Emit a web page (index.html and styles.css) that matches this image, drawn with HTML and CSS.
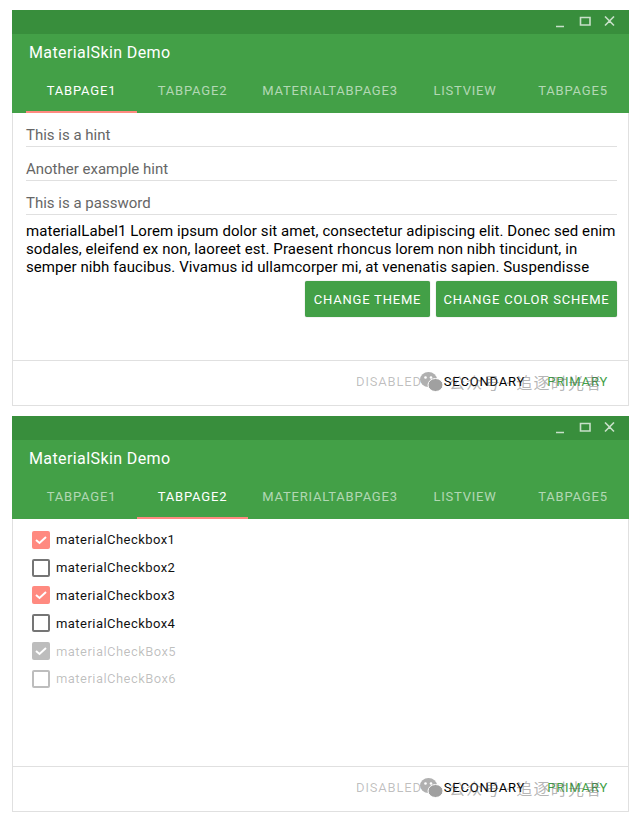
FILE: index.html
```html
<!DOCTYPE html>
<html lang="en">
<head>
<meta charset="utf-8">
<title>MaterialSkin Demo</title>
<link rel="stylesheet" href="styles.css">
</head>
<body>
<section class="window">
  <div class="titlebar">
    <svg class="controls" width="66" height="12" viewBox="0 0 66 12"><path class="ctl" d="M0 10.500h8M24.500 1.500h9.500v7.500h-9.500zM49 0.500l9 9M58 0.500l-9 9"/></svg>
  </div>
  <header class="appbar">
    <h1 class="apptitle">MaterialSkin Demo</h1>
    <nav class="tabs">
      <span class="tab t1 active">TABPAGE1</span>
      <span class="tab t1">TABPAGE2</span>
      <span class="tab t3">MATERIALTABPAGE3</span>
      <span class="tab t4">LISTVIEW</span>
      <span class="tab t5">TABPAGE5</span>
    </nav>
  </header>
  <main class="body">
    <div class="page form">
      <div class="field">This is a hint</div>
      <div class="field">Another example hint</div>
      <div class="field">This is a password</div>
      <p class="lorem">materialLabel1 Lorem ipsum dolor sit amet, consectetur adipiscing elit. Donec sed enim sodales, eleifend ex non, laoreet est. Praesent rhoncus lorem non nibh tincidunt, in semper nibh faucibus. Vivamus id ullamcorper mi, at venenatis sapien. Suspendisse</p>
      <div class="btnrow">
        <button class="btn">CHANGE THEME</button>
        <button class="btn">CHANGE COLOR SCHEME</button>
      </div>
    </div>
    <footer class="foot">
      <span class="fbtn disabled">DISABLED</span>
      <span class="fbtn">SECONDARY</span>
      <span class="fbtn primary">PRIMARY</span>
      <span class="watermark">
        <svg width="23" height="20" viewBox="0 0 23 20"><ellipse class="wm" cx="8.500" cy="7.500" rx="8.500" ry="7.500"/><ellipse class="wm2" cx="15.500" cy="13" rx="7.500" ry="6.500"/><circle class="wd" cx="5.500" cy="5.500" r="1.300"/><circle class="wd" cx="11" cy="5.500" r="1.300"/></svg>
        <span class="wmtext">公众号 · 追逐时光者</span>
      </span>
    </footer>
  </main>
</section>
<section class="window second">
  <div class="titlebar">
    <svg class="controls" width="66" height="12" viewBox="0 0 66 12"><path class="ctl" d="M0 10.500h8M24.500 1.500h9.500v7.500h-9.500zM49 0.500l9 9M58 0.500l-9 9"/></svg>
  </div>
  <header class="appbar">
    <h1 class="apptitle">MaterialSkin Demo</h1>
    <nav class="tabs">
      <span class="tab t1">TABPAGE1</span>
      <span class="tab t1 active">TABPAGE2</span>
      <span class="tab t3">MATERIALTABPAGE3</span>
      <span class="tab t4">LISTVIEW</span>
      <span class="tab t5">TABPAGE5</span>
    </nav>
  </header>
  <main class="body">
    <div class="page checks">
      <div class="check"><span class="box on"><svg width="18" height="18" viewBox="0 0 18 18"><path class="tick" d="M4 9l3.500 3L14 6"/></svg></span>materialCheckbox1</div>
      <div class="check"><span class="box"></span>materialCheckbox2</div>
      <div class="check"><span class="box on"><svg width="18" height="18" viewBox="0 0 18 18"><path class="tick" d="M4 9l3.500 3L14 6"/></svg></span>materialCheckbox3</div>
      <div class="check"><span class="box"></span>materialCheckbox4</div>
      <div class="check off"><span class="box on"><svg width="18" height="18" viewBox="0 0 18 18"><path class="tick" d="M4 9l3.500 3L14 6"/></svg></span>materialCheckBox5</div>
      <div class="check off"><span class="box"></span>materialCheckBox6</div>
    </div>
    <footer class="foot">
      <span class="fbtn disabled">DISABLED</span>
      <span class="fbtn">SECONDARY</span>
      <span class="fbtn primary">PRIMARY</span>
      <span class="watermark">
        <svg width="23" height="20" viewBox="0 0 23 20"><ellipse class="wm" cx="8.500" cy="7.500" rx="8.500" ry="7.500"/><ellipse class="wm2" cx="15.500" cy="13" rx="7.500" ry="6.500"/><circle class="wd" cx="5.500" cy="5.500" r="1.300"/><circle class="wd" cx="11" cy="5.500" r="1.300"/></svg>
        <span class="wmtext">公众号 · 追逐时光者</span>
      </span>
    </footer>
  </main>
</section>
</body>
</html>
```
FILE: styles.css
```css
* { box-sizing: border-box; }
html, body { margin: 0; background: #fff; }
body { padding: 10px 8px 0 12px; font-family: Roboto, "Noto Sans CJK SC", sans-serif; }
.window { width: 617px; height: 396px; display: flex; flex-direction: column; }
.second { margin-top: 10px; }
.titlebar { height: 24px; background: #388e3c; display: flex; justify-content: flex-end; align-items: center; }
.controls { margin-right: 7px; }
.ctl { fill: none; stroke: #c8e0c9; stroke-width: 1.600; }
.appbar { height: 79px; background: #43a047; color: #fff; display: flex; flex-direction: column; }
.apptitle { margin: 0; padding-left: 17px; height: 39px; font-size: 16px; font-weight: 400; line-height: 38px; letter-spacing: 0.4px; }
.tabs { display: flex; padding-left: 14px; height: 40px; }
.tab { height: 40px; line-height: 35px; text-align: center; font-size: 13px; font-weight: 400; letter-spacing: 0.8px; color: rgba(255,255,255,0.6); border-bottom: 2px solid transparent; }
.t1 { width: 111px; }
.t3 { width: 164px; }
.t4 { width: 106px; }
.t5 { width: 110px; }
.tab.active { color: #fff; border-bottom-color: #ff8a80; }
.body { flex: 1; display: flex; flex-direction: column; position: relative; border: 1px solid #e0e0e0; border-top: 0; }
.page { flex: 1; }
.form { padding: 0 11px 0 13px; }
.field { height: 34px; padding-top: 14px; font-size: 15px; line-height: 17px; color: #666; border-bottom: 1px solid #e0e0e0; }
.lorem { margin: 0; padding-top: 7px; font-size: 15px; line-height: 18px; letter-spacing: 0.07px; color: #000; }
.btnrow { display: flex; justify-content: flex-end; gap: 6px; margin-top: 5px; }
.btn { height: 36px; border: 0; border-radius: 2px; padding: 0; background: #43a047; color: #fff; font: 400 13px Roboto, sans-serif; letter-spacing: 0.8px; box-shadow: 0 0 1px rgba(0,0,0,0.45); }
.btn:first-child { width: 125px; }
.btn:last-child { width: 181px; }
.foot { height: 45px; flex: none; border-top: 1px solid #e0e0e0; position: relative; display: flex; justify-content: flex-end; align-items: center; gap: 22px; padding-right: 20px; padding-bottom: 4px; font-size: 13px; font-weight: 400; letter-spacing: 0.8px; color: #000; }
.disabled { color: rgba(0,0,0,0.26); }
.primary { color: #43a047; }
.watermark { position: absolute; left: 407px; top: 9px; display: flex; align-items: center; gap: 6px; }
.wm { fill: #b0b0b0; }
.wm2 { fill: #a0a0a0; stroke: #fff; }
.wd { fill: #fff; }
.wmtext { font-size: 16px; font-weight: 400; letter-spacing: 1.2px; color: rgba(90,90,90,0.45); white-space: nowrap; }
.checks { padding: 7px 0 0 19px; }
.check { height: 27.800px; display: flex; align-items: center; gap: 6px; font-size: 13px; letter-spacing: 0.45px; color: #111; }
.box { width: 18px; height: 18px; border: 2px solid #757575; border-radius: 2px; position: relative; flex: none; }
.box.on { border: 0; background: #ff8a80; }
.box svg { display: block; }
.tick { fill: none; stroke: #fff; stroke-width: 2; }
.off { color: rgba(0,0,0,0.26); }
.off .box { border-color: #bdbdbd; }
.off .box.on { background: #bdbdbd; }
```
